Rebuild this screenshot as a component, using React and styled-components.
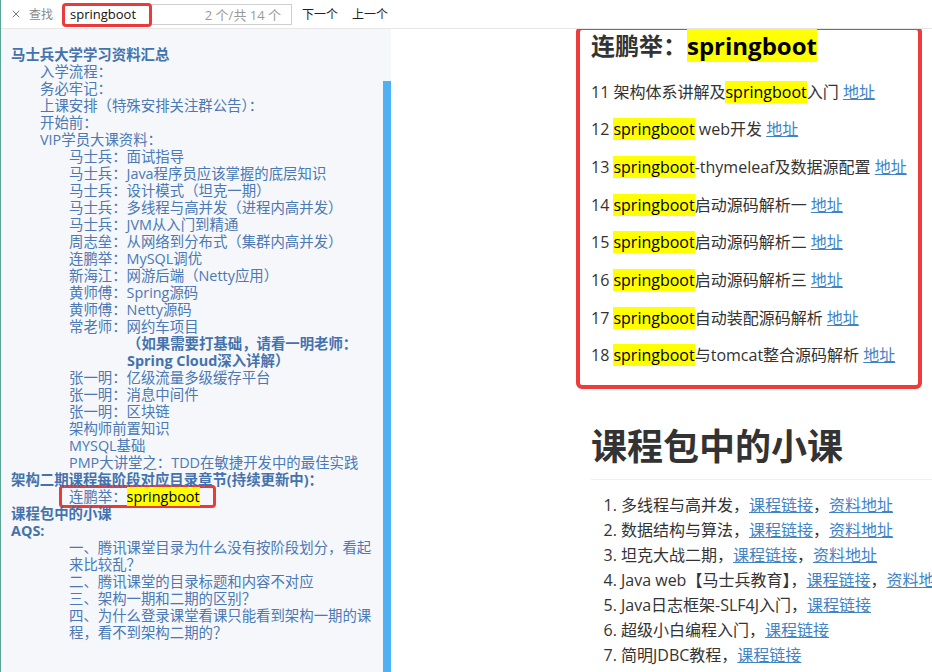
import styled, { createGlobalStyle } from 'styled-components';
import { X } from 'lucide-react';

const GlobalStyle = createGlobalStyle`
    html, body {
        margin: 0;
        padding: 0;
        background: #fff;
    }
    body {
        font-family: "Open Sans", "Noto Sans CJK SC", sans-serif;
    }
`;

// Window frame
const Frame = styled.div`
    width: 932px;
    height: 672px;
    display: flex;
    flex-direction: column;
    border-left: 1px solid #5ba597;
    box-sizing: border-box;
    overflow: hidden;
`;

// Find toolbar
const FindBar = styled.div`
    height: 28px;
    flex: 0 0 auto;
    display: flex;
    align-items: center;
    padding-left: 9px;
    border-bottom: 1px solid #e6e6e6;
    font-size: 12px;
    color: #222;
`;

const CloseIcon = styled(X)`
    color: #555;
`;

const FindLabel = styled.span`
    margin-left: 7px;
    color: #888;
`;

const SearchBox = styled.div`
    position: relative;
    margin-left: 10px;
    width: 229px;
    height: 21px;
    box-sizing: border-box;
    border: 1px solid #cfcfcf;
    display: flex;
    align-items: center;
    justify-content: space-between;
    padding: 0 10px 0 6px;
`;

const SearchText = styled.span`
    font-size: 13px;
    color: #111;
`;

const Counter = styled.span`
    font-size: 13px;
    color: #9a9a9a;
`;

// red annotation drawn over the input
const Callout = styled.div`
    position: absolute;
    left: -2px;
    top: -2px;
    width: 90px;
    height: 24px;
    box-sizing: border-box;
    border: 3px solid #ea3a3a;
    border-radius: 4px;
`;

const NavButton = styled.span`
    margin-left: ${p => p.$gap}px;
    font-size: 12px;
    color: #222;
`;

const Body = styled.div`
    flex: 1;
    display: flex;
    min-height: 0;
`;

// Outline sidebar
const Sidebar = styled.aside`
    width: 390px;
    flex: 0 0 auto;
    display: flex;
    background: #f5f7fa;
`;

const Tree = styled.div`
    flex: 1;
    padding: 17px 0 0 10px;
    font-size: 14.4px;
    line-height: 17px;
    color: #4a79b5;
    white-space: nowrap;
    overflow: hidden;
`;

const Item = styled.div`
    padding-left: ${p => p.$level * 29}px;
    font-weight: ${p => (p.$bold ? 700 : 400)};
    color: ${p => (p.$bold ? '#4472ad' : '#4a79b5')};
`;

const MarkedItem = styled.div`
    width: 157px;
    height: 23px;
    box-sizing: border-box;
    margin: -3px 0 -3px 48px;
    padding-left: 7px;
    border: 3px solid #ea3a3a;
    border-radius: 4px;
    line-height: 17px;
`;

const Mark = styled.mark`
    background: #ffff00;
    color: #000;
`;

const ScrollTrack = styled.div`
    width: 8px;
    display: flex;
    flex-direction: column;
`;

const ScrollThumb = styled.div`
    margin-top: 52px;
    flex: 1;
    background: #4eb1f3;
`;

// Document pane
const Pane = styled.main`
    flex: 1;
    background: #fff;
    overflow: hidden;
    color: #333;
`;

const Article = styled.div`
    width: 560px;
    margin-left: 185px;
`;

const Section = styled.section`
    width: 346px;
    box-sizing: border-box;
    margin-top: -3px;
    padding: 0 0 4px 11px;
    border: 4px solid #ee3b3b;
    border-radius: 6px;
`;

const SectionTitle = styled.h2`
    margin: 0 0 17.5px;
    font-size: 24px;
    line-height: 32px;
    font-weight: 700;
    color: #333;
`;

const Para = styled.p`
    margin: 12.7px 0;
    font-size: 16px;
    line-height: 25px;
    white-space: nowrap;
`;

const Link = styled.a`
    color: #4183c4;
    text-decoration: underline;
`;

const Heading = styled.h1`
    margin: 36px 0 0 15px;
    padding-bottom: 10px;
    font-size: 36px;
    line-height: 44px;
    font-weight: 700;
    color: #333;
    border-bottom: 1px solid #eee;
`;

const List = styled.ol`
    margin: 13px 0 0 15px;
    padding-left: 30px;
    font-size: 16px;
    line-height: 25px;
    white-space: nowrap;
`;

const outline = [
    { t: '马士兵大学学习资料汇总', l: 0, b: true },
    { t: '入学流程：', l: 1 },
    { t: '务必牢记：', l: 1 },
    { t: '上课安排（特殊安排关注群公告）：', l: 1 },
    { t: '开始前：', l: 1 },
    { t: 'VIP学员大课资料：', l: 1 },
    { t: '马士兵：面试指导', l: 2 },
    { t: '马士兵：Java程序员应该掌握的底层知识', l: 2 },
    { t: '马士兵：设计模式（坦克一期）', l: 2 },
    { t: '马士兵：多线程与高并发（进程内高并发）', l: 2 },
    { t: '马士兵：JVM从入门到精通', l: 2 },
    { t: '周志垒：从网络到分布式（集群内高并发）', l: 2 },
    { t: '连鹏举：MySQL调优', l: 2 },
    { t: '新海江：网游后端（Netty应用）', l: 2 },
    { t: '黄师傅：Spring源码', l: 2 },
    { t: '黄师傅：Netty源码', l: 2 },
    { t: '常老师：网约车项目', l: 2 },
    { t: '（如果需要打基础，请看一明老师：', l: 4, b: true },
    { t: 'Spring Cloud深入详解）', l: 4, b: true },
    { t: '张一明：亿级流量多级缓存平台', l: 2 },
    { t: '张一明：消息中间件', l: 2 },
    { t: '张一明：区块链', l: 2 },
    { t: '架构师前置知识', l: 2 },
    { t: 'MYSQL基础', l: 2 },
    { t: 'PMP大讲堂之：TDD在敏捷开发中的最佳实践', l: 2 },
    { t: '架构二期课程每阶段对应目录章节(持续更新中)：', l: 0, b: true },
    { mark: true },
    { t: '课程包中的小课', l: 0, b: true },
    { t: 'AQS:', l: 0, b: true },
    { t: '一、腾讯课堂目录为什么没有按阶段划分，看起', l: 2 },
    { t: '来比较乱？', l: 2 },
    { t: '二、腾讯课堂的目录标题和内容不对应', l: 2 },
    { t: '三、架构一期和二期的区别？', l: 2 },
    { t: '四、为什么登录课堂看课只能看到架构一期的课', l: 2 },
    { t: '程，看不到架构二期的？', l: 2 },
];

const lessons = [
    ['11 架构体系讲解及', 'springboot', '入门 '],
    ['12 ', 'springboot', ' web开发 '],
    ['13 ', 'springboot', '-thymeleaf及数据源配置 '],
    ['14 ', 'springboot', '启动源码解析一 '],
    ['15 ', 'springboot', '启动源码解析二 '],
    ['16 ', 'springboot', '启动源码解析三 '],
    ['17 ', 'springboot', '自动装配源码解析 '],
    ['18 ', 'springboot', '与tomcat整合源码解析 '],
];

const minis = [
    { t: '多线程与高并发，', data: true },
    { t: '数据结构与算法，', data: true },
    { t: '坦克大战二期，', data: true },
    { t: 'Java web【马士兵教育】，', data: true },
    { t: 'Java日志框架-SLF4J入门，' },
    { t: '超级小白编程入门，' },
    { t: '简明JDBC教程，' },
];

export default function App() {
    return (
        <>
            <GlobalStyle />
            <Frame>
                <FindBar>
                    <CloseIcon size={12} strokeWidth={1.6} />
                    <FindLabel>查找</FindLabel>
                    <SearchBox>
                        <SearchText>springboot</SearchText>
                        <Counter>2 个/共 14 个</Counter>
                        <Callout />
                    </SearchBox>
                    <NavButton $gap={10}>下一个</NavButton>
                    <NavButton $gap={14}>上一个</NavButton>
                </FindBar>
                <Body>
                    <Sidebar>
                        <Tree>
                            {outline.map((row, i) =>
                                row.mark ? (
                                    <MarkedItem key={i}>
                                        连鹏举：<Mark>springboot</Mark>
                                    </MarkedItem>
                                ) : (
                                    <Item key={i} $level={row.l} $bold={row.b}>
                                        {row.t}
                                    </Item>
                                )
                            )}
                        </Tree>
                        <ScrollTrack>
                            <ScrollThumb />
                        </ScrollTrack>
                    </Sidebar>
                    <Pane>
                        <Article>
                            <Section>
                                <SectionTitle>
                                    连鹏举：<Mark>springboot</Mark>
                                </SectionTitle>
                                {lessons.map(([pre, hit, post]) => (
                                    <Para key={pre}>
                                        {pre}
                                        <Mark>{hit}</Mark>
                                        {post}
                                        <Link>地址</Link>
                                    </Para>
                                ))}
                            </Section>
                            <Heading>课程包中的小课</Heading>
                            <List>
                                {minis.map(m => (
                                    <li key={m.t}>
                                        {m.t}
                                        <Link>课程链接</Link>
                                        {m.data && (
                                            <>
                                                ，<Link>资料地址</Link>
                                            </>
                                        )}
                                    </li>
                                ))}
                            </List>
                        </Article>
                    </Pane>
                </Body>
            </Frame>
        </>
    );
}
